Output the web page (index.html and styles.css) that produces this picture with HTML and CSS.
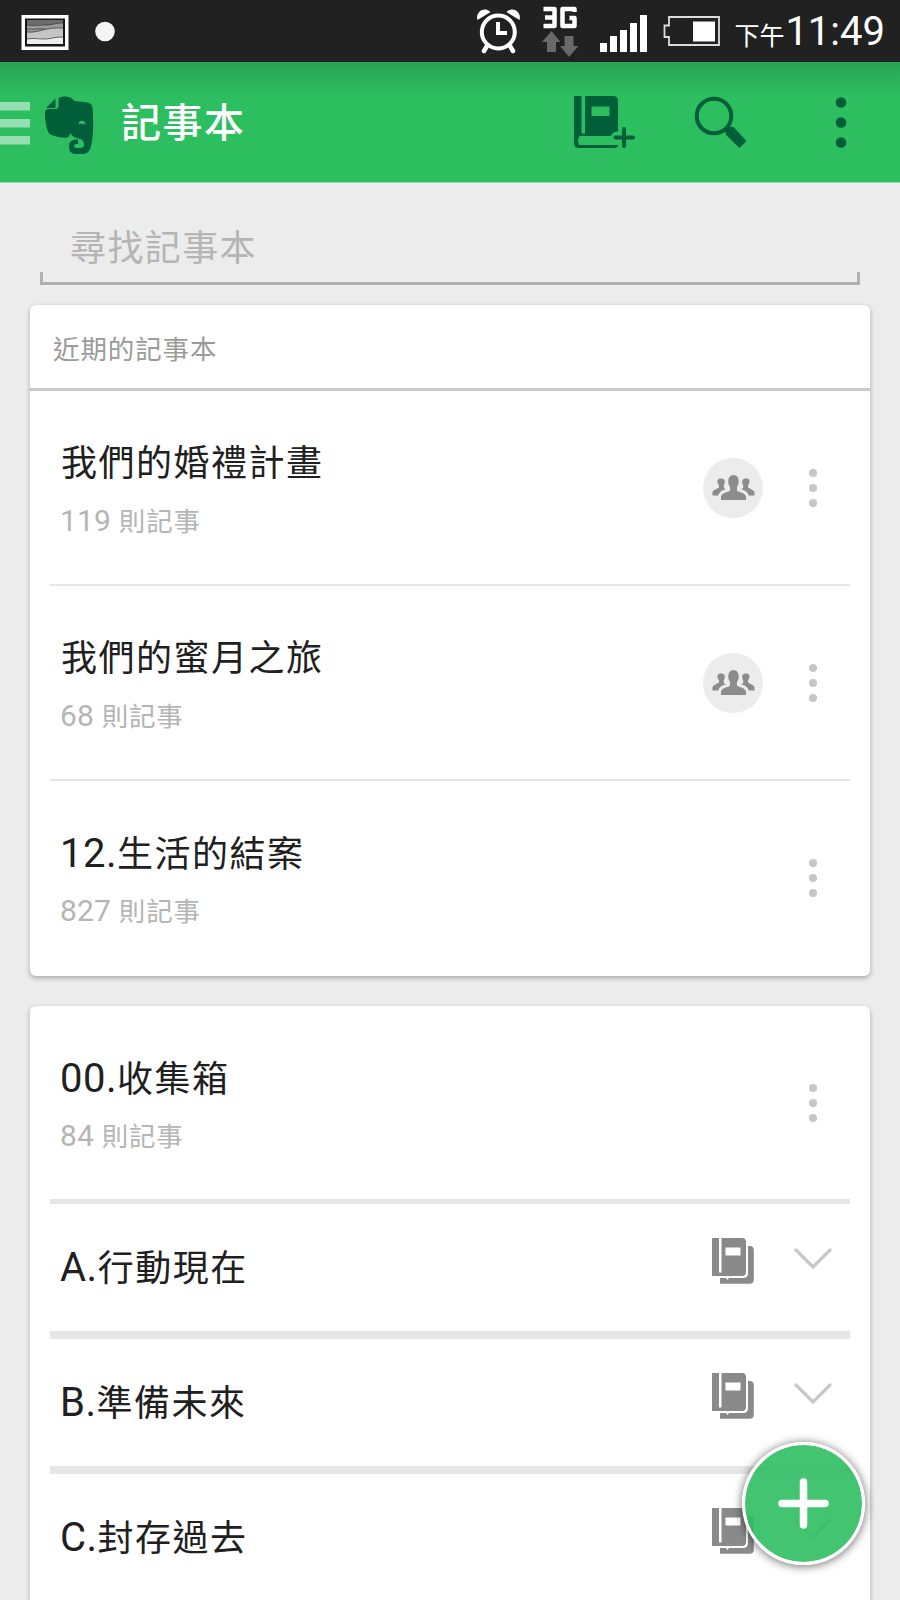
FILE: index.html
```html
<!DOCTYPE html>
<html lang="zh-Hant">

<head>
    <meta charset="UTF-8">
    <title>記事本</title>
    <link rel="stylesheet" href="styles.css">
</head>

<body>
    <!-- Shared icons -->
    <svg class="sprite" width="0" height="0">
        <symbol id="people" viewBox="0 0 60 60">
            <circle cx="30" cy="30" r="30" fill="#ececec" />
            <g fill="#8c8c8c">
                <path d="M18 42v-3.500c1-4 7-4 9-6v-3.500l-1.500-3c-1-5 1-9 5-9s6 4 5 9l-1.500 3v3.500c2 2 8 2 9 6V42z" />
                <path id="side" d="M9.500 37.500v-3.500c1-2.500 5.500-3 6.500-5v-1.500c-3-4.500-1.500-7 2-7s5 2.500 2.800 7v2c.5 1 1.200 1.500 2 2-3 .5-6.500 2-7.500 6z" />
                <use href="#side" transform="translate(61 0) scale(-1 1)" />
            </g>
        </symbol>
        <symbol id="dots" viewBox="0 0 8 38">
            <g fill="#c6c6c6">
                <circle cx="4" cy="4" r="4" />
                <circle cx="4" cy="19" r="4" />
                <circle cx="4" cy="34" r="4" />
            </g>
        </symbol>
        <symbol id="stack" viewBox="0 0 42 46">
            <g fill="#8a8a8a">
                <path d="M0 0h7v34.500h2.500V0H30q4 0 4 4v30q0 4-4 4H0z" />
                <path d="M36 8h1.500q4.300 0 4.300 4v29.500q0 4.300-4.300 4.300H8V40h6l1.500 2 1.500-2h14q5 0 5-5z" />
            </g>
            <path d="M13.500 9.500h15v8h-15z" fill="#fff" />
        </symbol>
        <symbol id="chevron" viewBox="0 0 38 22">
            <path d="M2 2l17 17L36 2" fill="none" stroke="#c8c8c8" stroke-width="3.300" stroke-linecap="round" />
        </symbol>
    </svg>

    <div class="status-bar">
        <svg class="status-left" width="130" height="62" viewBox="0 0 130 62">
            <rect x="21.500" y="15" width="47" height="35" fill="#fff" />
            <rect x="25" y="18.500" width="40" height="28" fill="#171717" />
            <path d="M27 20h36v24H27z" fill="#eee" />
            <path d="M27 20h36v17c-8 0-12 3-20 2-7-1-9 0-16 0z" fill="#c4c4c4" />
            <path d="M27 20h36v8c-8-1-14 1-20 2-6 2-10 3-16 2z" fill="#999" />
            <path d="M27 20h36v3c-8 0-10 3-18 2-8 0-10 1-18 0z" fill="#6d6d6d" />
            <path d="M27 25c9 1 13 0 19 0s9-2 17-2M27 32c12 1 18-5 36-4M27 29c7 1 12-1 18 0M27 39c8-1 10 0 17 0 7 0 10-2 19-2" fill="none" stroke="#444" stroke-width=".8" />
            <circle cx="105" cy="31.500" r="9.800" fill="#f4f4f4" />
        </svg>
        <svg class="status-right" width="260" height="62" viewBox="470 0 260 62">
            <!-- alarm -->
            <g fill="none" stroke="#fff">
                <circle cx="498.300" cy="32" r="16.500" stroke-width="4" />
                <path d="M498 22v11h9" stroke-width="4" />
                <path d="M487 46l-3 5M510 46l3 5" stroke-width="4.500" stroke-linecap="round" />
            </g>
            <path d="M477.500 20c-2-6 3-11 8-10.500 2 .2 4 1.500 5 2.500zM519.500 20c2-6-3-11-8-10.500-2 .2-4 1.500-5 2.500z" fill="#fff" />
            <!-- network -->
            <path d="M543.500 9h11v17h-11M545 17.500h9M574.500 12V9H562.500v17h12v-8h-5" fill="none" stroke="#fff" stroke-width="4.500" stroke-linejoin="round" />
            <path d="M551.500 31l9 11h-4.500v10h-9V42h-5zM569 57l-9-11h4.500V36h9v10h5z" fill="#696969" />
            <!-- signal -->
            <path d="M600 43h7v9h-7zM610 36h7v16h-7zM620 30h7v22h-7zM630 23h7v29h-7zM640 15h7v37h-7z" fill="#fff" />
            <!-- battery -->
            <path d="M669 17h50v28h-50v-8h-4.500V25.500h4.500z" fill="none" stroke="#ddd" stroke-width="1.800" />
            <path d="M693 21.500h22v20h-22z" fill="#fff" />
        </svg>
        <div class="clock"><span>下午</span>11:49</div>
    </div>

    <div class="app-bar">
        <svg class="logo" width="100" height="120" viewBox="0 62 100 120">
            <path d="M0 102h30v8.500H0zM0 119h30v8.500H0zM0 136h30v8.500H0z" fill="#fff" fill-opacity=".5" />
            <path d="M59 98c3-2 9-2 12 0 2 1 2.500 2.500 4 3 5 1 10 .5 14 2 3 1 4 4 4 10 .5 10 .3 25-2 33-1.500 6-4 8-9 8h-6c-5 0-7-3-7-7v-1c0-5 3-6.500 9-6.500v4.500c-3 0-4 .5-4 2s1 2 3 2h3c3 0 4-1 4-3 0-3-1-5-3.500-6-4-1-8-1.500-10-6-1 3-2 5-5 4.800-6-.3-11-1.500-15-3.300-4-2-5.500-15-5.500-21 0-3 1-4 3-4.500h7.500c2 0 3-1 3-3v-6c0-1 0-1.500.5-2zM46 108l9.500-9.500v9.500z" fill="#005f38" />
            <path d="M78.500 124c.5-4.500 7-4.500 7 .5-2-1-4-1-7-.5z" fill="#2dbe60" />
        </svg>
        <h1>記事本</h1>
        <svg class="actions" width="340" height="120" viewBox="560 62 340 120">
            <g fill="#005f38">
                <path d="M574 96h7.500v37.500h3.500V96h28q5 0 5 5v35h-44zM574 134h5v11h39q0 3-4 3h-35q-5 0-5-5z" />
                <path d="M591.500 106.500h18v9.500h-18z" fill="#2dbe60" />
                <path d="M582 136.500h36v8.500h-36q-4 0-4-4.200t4-4.300z" fill="#2dbe60" />
                <circle cx="617" cy="138" r="6.500" fill="#2dbe60" />
                <path d="M624 129v17M615.500 137.500H633" stroke="#005f38" stroke-width="4" stroke-linecap="round" />
            </g>
            <circle cx="714" cy="116" r="17.300" fill="none" stroke="#005f38" stroke-width="4" />
            <path d="M725.500 131.500l2.500-5 5.500.5 13 14-7 7-13.500-13z" fill="#005f38" />
            <g fill="#005f38">
                <circle cx="841" cy="102.500" r="5.300" />
                <circle cx="841" cy="122.500" r="5.300" />
                <circle cx="841" cy="142.500" r="5.300" />
            </g>
        </svg>
    </div>

    <div class="content">
        <div class="search">尋找記事本</div>

        <div class="card">
            <div class="card-title">近期的記事本</div>
            <div class="row">
                <div class="text">
                    <h2>我們的婚禮計畫</h2>
                    <p><span>119 </span>則記事</p>
                </div>
                <svg class="people"><use href="#people" /></svg>
                <svg class="dots"><use href="#dots" /></svg>
            </div>
            <div class="row">
                <div class="text">
                    <h2>我們的蜜月之旅</h2>
                    <p><span>68 </span>則記事</p>
                </div>
                <svg class="people"><use href="#people" /></svg>
                <svg class="dots"><use href="#dots" /></svg>
            </div>
            <div class="row">
                <div class="text">
                    <h2><span>12.</span>生活的結案</h2>
                    <p><span>827 </span>則記事</p>
                </div>
                <svg class="dots"><use href="#dots" /></svg>
            </div>
        </div>

        <div class="card">
            <div class="row inbox">
                <div class="text">
                    <h2><span>00.</span>收集箱</h2>
                    <p><span>84 </span>則記事</p>
                </div>
                <svg class="dots"><use href="#dots" /></svg>
            </div>
            <div class="row group">
                <h2><span>A.</span>行動現在</h2>
                <svg class="stack"><use href="#stack" /></svg>
                <svg class="chevron"><use href="#chevron" /></svg>
            </div>
            <div class="row group">
                <h2><span>B.</span>準備未來</h2>
                <svg class="stack"><use href="#stack" /></svg>
                <svg class="chevron"><use href="#chevron" /></svg>
            </div>
            <div class="row group">
                <h2><span>C.</span>封存過去</h2>
                <svg class="stack"><use href="#stack" /></svg>
                <svg class="chevron"><use href="#chevron" /></svg>
            </div>
        </div>
    </div>

    <div class="fab">
        <svg width="51" height="51" viewBox="0 0 51 51">
            <path d="M25.500 4v43M4 25.500h43" stroke="#fff" stroke-width="7.500" stroke-linecap="round" />
        </svg>
    </div>
</body>

</html>
```

FILE: styles.css
```css
* {
    box-sizing: border-box;
}

body {
    position: relative;
    width: 900px;
    height: 1600px;
    margin: 0;
    overflow: hidden;
    background: #ececec;
    font-family: Roboto, "Noto Sans CJK TC", sans-serif;
}

h1,
h2,
p {
    margin: 0;
    font-weight: 400;
    white-space: nowrap;
}

svg {
    display: block;
    flex: none;
}

.sprite {
    position: absolute;
}

.status-bar {
    display: flex;
    align-items: center;
    justify-content: space-between;
    height: 62px;
    padding-right: 15px;
    background: #212121;
}

.status-right {
    margin-left: auto;
}

.clock {
    width: 155px;
    height: 62px;
    padding-top: 1px;
    color: #fff;
    font-size: 40px;
    line-height: 62px;
    text-align: right;
    white-space: nowrap;
}

.clock span {
    margin-right: 1px;
    font-size: 25px;
}

.app-bar {
    display: flex;
    align-items: center;
    height: 121px;
    background: linear-gradient(#29a554, #2dbe60 36px);
    border-bottom: 1px solid #97dfb0;
}

.app-bar h1 {
    flex: 1;
    padding: 4px 0 0 21px;
    color: #fff;
    font-size: 40px;
    font-weight: 500;
    letter-spacing: 1.5px;
    line-height: 116px;
}

.content {
    padding: 0 30px;
}

.search {
    position: relative;
    height: 102px;
    margin: 0 10px 20px;
    padding: 40px 30px 0;
    color: #b5b5b5;
    border-bottom: 3px solid #b0b0b0;
    font-size: 36px;
    line-height: 52px;
    letter-spacing: 1.4px;
}

/* little ticks at both ends of the underline */
.search::after {
    content: "";
    position: absolute;
    left: 0;
    right: 0;
    bottom: 0;
    height: 10px;
    border: solid #b0b0b0;
    border-width: 0 3px;
}

.card {
    margin-bottom: 30px;
    background: #fff;
    border-radius: 6px;
    box-shadow: 0 2px 5px rgba(0, 0, 0, .3);
}

.card-title {
    height: 86px;
    padding: 2px 0 0 23px;
    color: #9b9b9b;
    border-bottom: 3px solid #c9c9c9;
    font-size: 26.500px;
    line-height: 86px;
    letter-spacing: .9px;
}

.row {
    display: flex;
    align-items: center;
    height: 195px;
    margin: 0 20px;
    padding: 0 33px 0 11px;
    border-bottom: 2px solid #e6e6e6;
}

.row:last-child {
    border-bottom-color: transparent;
}

.text,
.group h2 {
    flex: 1;
}

.text {
    padding-top: 9px;
}

.row h2 {
    height: 56px;
    color: #202020;
    font-size: 36px;
    line-height: 56px;
    letter-spacing: 1.5px;
}

.row h2 span {
    margin-left: -1px;
    font-size: 40px;
    letter-spacing: .5px;
}

.row p {
    height: 56px;
    margin-top: 1px;
    color: #b5b5b5;
    font-size: 26.500px;
    line-height: 56px;
    letter-spacing: .8px;
}

.row p span {
    margin-left: -1px;
    font-size: 30px;
    letter-spacing: .2px;
}

.people {
    width: 60px;
    height: 60px;
    margin-right: 46.500px;
}

.dots {
    width: 8px;
    height: 38px;
}

.inbox {
    height: 198px;
    border-bottom-width: 5px;
}

.group {
    height: 135px;
    padding-right: 18px;
    border-bottom-width: 8px;
}

.stack {
    width: 42px;
    height: 46px;
    margin: 0 40px 14px 0;
}

.chevron {
    width: 38px;
    height: 22px;
    margin-bottom: 17px;
}

.fab {
    position: absolute;
    top: 1442px;
    left: 742px;
    display: flex;
    align-items: center;
    justify-content: center;
    width: 123px;
    height: 123px;
    background: rgba(45, 190, 96, .9) padding-box;
    border: 3px solid #fff;
    border-radius: 50%;
    box-shadow: 0 1px 9px 1px rgba(0, 0, 0, .5);
}
```
